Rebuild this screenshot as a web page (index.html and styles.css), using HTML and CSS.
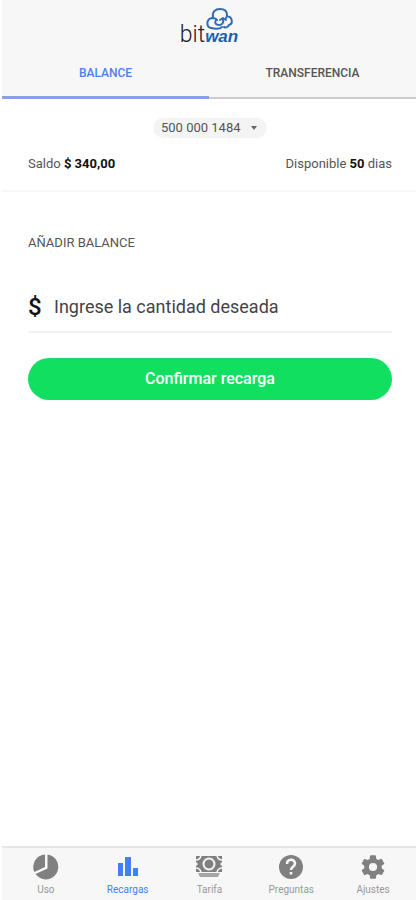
FILE: index.html
```html
<!DOCTYPE html>
<html lang="es">
<head>
    <meta charset="UTF-8">
    <meta name="viewport" content="width=device-width, initial-scale=1.0">
    <title>Bitwan - Recargas</title>
    <link rel="stylesheet" href="styles.css">
</head>
<body>
    <header class="header">
        <div class="logo">
            <svg width="64" height="42" viewBox="0 0 64 42" role="img" aria-label="bitwan">
                <g fill="none" stroke="#2f6db8" stroke-width="2" stroke-linecap="round" stroke-linejoin="round">
                    <path d="M34 22c-5-1-5-9 1-10c2 0 4 0 5 2M36 11c-1-5 2-8 7-8c4 0 7 2 7 6c0 1 0 2-1 3M50 10c6 1 6 8 2 9c-1 2-3 3-5 2"/>
                    <path d="M39 14c-2 3 0 5 3 5s5-2 4-6M43 14l3-2l3 2M34 22c4 1 9 1 11-1"/>
                </g>
            </svg>
            <span class="logo-text"><span class="logo-bit">bit</span><span class="logo-wan">wan</span></span>
        </div>
        <nav class="tabs">
            <a class="tab active" href="#balance">BALANCE</a>
            <a class="tab" href="#transferencia">TRANSFERENCIA</a>
        </nav>
    </header>

    <main class="content">
        <section class="summary">
            <div class="account">
                <select class="account-select" aria-label="Cuenta">
                    <option>500 000 1484</option>
                </select>
                <svg class="account-arrow" width="6" height="4" viewBox="0 0 6 4" aria-hidden="true">
                    <path d="M0 0h6L3 4z" fill="#666"/>
                </svg>
            </div>
            <div class="summary-row">
                <span>Saldo <b>$ 340,00</b></span>
                <span>Disponible <b>50</b> dias</span>
            </div>
        </section>

        <form class="recharge" id="balance">
            <h2 class="recharge-title">AÑADIR BALANCE</h2>
            <div class="field">
                <label class="field-symbol" for="amount">$</label>
                <input class="field-input" id="amount" type="text" inputmode="decimal" placeholder="Ingrese la cantidad deseada">
            </div>
            <button class="confirm" type="button">Confirmar recarga</button>
        </form>
    </main>

    <nav class="bottom-nav">
        <a class="nav-item" href="#uso">
            <svg width="28" height="28" viewBox="0 0 28 28" fill="currentColor" aria-hidden="true">
                <path d="M13 1.500v12.500L2.300 19A12.500 12.500 0 0 1 13 1.500z"/>
                <path d="M15.500 1.500A12.500 12.500 0 1 1 3.500 21L15.500 15.500z"/>
            </svg>
            <span>Uso</span>
        </a>
        <a class="nav-item active" href="#recargas">
            <svg width="28" height="28" viewBox="0 0 28 28" fill="currentColor" aria-hidden="true">
                <path d="M4 10h5v13H4zM11 4h6v19h-6zM19 15h5v8h-5z"/>
            </svg>
            <span>Recargas</span>
        </a>
        <a class="nav-item" href="#tarifa">
            <svg width="28" height="28" viewBox="0 0 28 28" fill="currentColor" aria-hidden="true">
                <path d="M1 3h26v16H1z"/>
                <g fill="none" stroke="#f7f7f7" stroke-width="2">
                    <circle cx="14" cy="11" r="5.500"/>
                    <path d="M1 7c2 0 4-1 5-4M27 7c-2 0-4-1-5-4M1 15c2 0 4 1 5 4M27 15c-2 0-4 1-5 4" stroke-width="1.500"/>
                </g>
                <path d="M0 8l3 3l-3 3zM28 8l-3 3l3 3z" fill="#f7f7f7"/>
                <path d="M3 20h22l-2 4H5z" fill="#a5a5a5"/>
            </svg>
            <span>Tarifa</span>
        </a>
        <a class="nav-item" href="#preguntas">
            <svg width="28" height="28" viewBox="0 0 28 28" aria-hidden="true">
                <circle cx="14" cy="14" r="12" fill="currentColor"/>
                <path d="M10 11c0-5.500 8-5.500 8-.500c0 3-4 3.500-4 6.500" fill="none" stroke="#f7f7f7" stroke-width="2.500"/>
                <path d="M12.700 19h2.600v2.600h-2.600z" fill="#f7f7f7"/>
            </svg>
            <span>Preguntas</span>
        </a>
        <a class="nav-item" href="#ajustes">
            <svg width="28" height="28" viewBox="0 0 24 24" fill="currentColor" aria-hidden="true">
                <path d="M19.400 13c.040-.300.060-.600.060-1s-.020-.700-.060-1l2.100-1.650a.500.500 0 0 0 .120-.640l-2-3.460a.500.500 0 0 0-.600-.220l-2.500 1a7.300 7.300 0 0 0-1.700-.980l-.380-2.650A.490.490 0 0 0 14 2h-4a.490.490 0 0 0-.490.420l-.380 2.650c-.610.250-1.170.590-1.690.980l-2.490-1a.500.500 0 0 0-.610.220l-2 3.460a.490.490 0 0 0 .120.640L4.570 11a7.900 7.900 0 0 0 0 2l-2.110 1.630a.500.500 0 0 0-.120.640l2 3.460c.120.220.390.300.610.220l2.490-1c.520.400 1.080.730 1.690.980l.380 2.650c.030.240.240.420.490.420h4c.250 0 .460-.180.490-.420l.380-2.650a7.300 7.300 0 0 0 1.690-.980l2.490 1c.230.080.490 0 .610-.220l2-3.460a.500.500 0 0 0-.120-.640L19.400 13zM12 15.500a3.500 3.500 0 1 1 0-7a3.500 3.500 0 0 1 0 7z"/>
            </svg>
            <span>Ajustes</span>
        </a>
    </nav>
</body>
</html>
```

FILE: styles.css
```css
* {
    box-sizing: border-box;
}
body {
    display: flex;
    flex-direction: column;
    min-height: 100vh;
    margin: 0;
    padding: 0 2px;
    background: #fff;
    color: #555;
    font-family: Roboto, sans-serif;
    font-size: 13px;
    line-height: 16px;
}
a {
    color: inherit;
    text-decoration: none;
}

/* Header */
.header {
    background: #f7f7f7;
}
.logo {
    display: grid;
    justify-content: center;
    padding: 6px 0 2px;
}
.logo svg,
.logo-text {
    grid-area: 1 / 1;
}
.logo-text {
    align-self: end;
    justify-self: center;
    line-height: 20px;
    white-space: nowrap;
}
.logo-bit {
    color: #222;
    font-family: "Liberation Sans Narrow", Roboto, sans-serif;
    font-size: 23px;
    font-weight: 300;
}
.logo-wan {
    color: #1d5fae;
    font-family: "Liberation Sans", sans-serif;
    font-size: 17px;
    font-style: italic;
    font-weight: 700;
}
.tabs {
    display: flex;
}
.tab {
    flex: 1;
    height: 49px;
    border-bottom: 2px solid #ccc;
    font-size: 12px;
    font-weight: 500;
    line-height: 47px;
    text-align: center;
}
.tab.active {
    border-bottom: 3px solid #8c9fe6;
    color: #4c80f0;
}

/* Account summary */
.content {
    flex: 1;
}
.summary {
    padding: 19px 24px 18px 26px;
    border-bottom: 2px solid #f7f7f7;
}
.account {
    position: relative;
    width: 114px;
    margin: 0 auto 18px;
}
.account-select {
    display: block;
    width: 100%;
    height: 20px;
    padding: 0 8px;
    border: 0;
    border-radius: 10px;
    background: #f4f4f4;
    color: #555;
    font: inherit;
    appearance: none;
}
.account-arrow {
    position: absolute;
    top: 8px;
    right: 10px;
    pointer-events: none;
}
.summary-row {
    display: flex;
    justify-content: space-between;
}
.summary b {
    color: #111;
    font-weight: 700;
}

/* Recharge form */
.recharge {
    padding: 43px 24px 24px 26px;
}
.recharge-title {
    margin: 0 0 32px;
    font-size: 13px;
    font-weight: 400;
}
.field {
    display: flex;
    align-items: center;
    height: 50px;
    margin-bottom: 25px;
    border-bottom: 2px solid #f2f2f2;
}
.field-symbol {
    width: 26px;
    color: #111;
    font-size: 24px;
    font-weight: 500;
}
.field-input {
    flex: 1;
    min-width: 0;
    padding: 0;
    border: 0;
    outline: 0;
    background: none;
    color: #333;
    font: inherit;
    font-size: 18px;
    line-height: 24px;
}
.field-input::placeholder {
    color: #444;
}
.confirm {
    width: 100%;
    height: 42px;
    border: 0;
    border-radius: 21px;
    background: #11df60;
    color: #fff;
    font: inherit;
    font-size: 16px;
    font-weight: 500;
}

/* Bottom navigation */
.bottom-nav {
    display: flex;
    height: 54px;
    padding: 0 2px 0 3px;
    border-top: 2px solid #e6e6e6;
    background: #f7f7f7;
}
.nav-item {
    display: flex;
    flex: 1;
    flex-direction: column;
    align-items: center;
    gap: 2px;
    padding-top: 5px;
    color: #999;
    font-size: 10px;
    line-height: 14px;
}
.nav-item svg {
    color: #808080;
}
.nav-item.active,
.nav-item.active svg {
    color: #4480f5;
}
```
